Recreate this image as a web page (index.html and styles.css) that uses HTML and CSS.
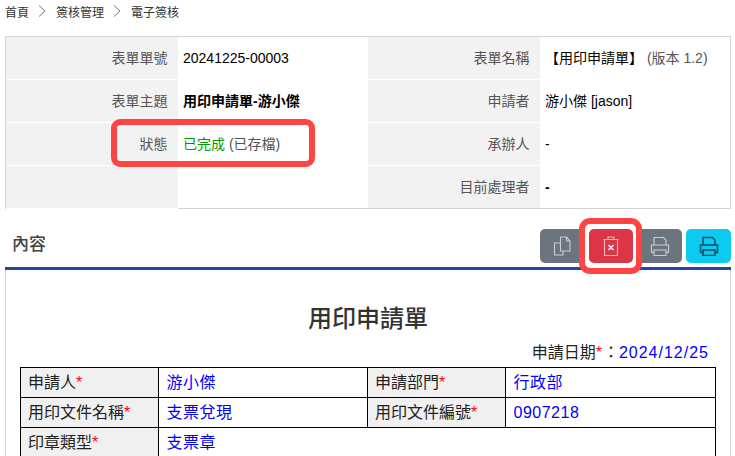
FILE: index.html
```html
<!DOCTYPE html>
<html lang="zh-Hant">
<head>
<meta charset="utf-8">
<title>電子簽核</title>
<link rel="stylesheet" href="styles.css">
</head>
<body>
<nav class="crumbs">
  <span>首頁</span><svg class="chev" viewBox="0 0 8 12"><path d="M1 .5 7 6l-6 5.500"/></svg>
  <span>簽核管理</span><svg class="chev" viewBox="0 0 8 12"><path d="M1 .5 7 6l-6 5.500"/></svg>
  <span>電子簽核</span>
</nav>
<section class="info">
  <div class="k">表單單號</div><div class="v">20241225-00003</div>
  <div class="k">表單名稱</div><div class="v wide">【用印申請單】 <span class="muted">(版本 1.2)</span></div>
  <div class="k">表單主題</div><div class="v strong">用印申請單-游小傑</div>
  <div class="k">申請者</div><div class="v">游小傑 [jason]</div>
  <div class="k">狀態</div><div class="v"><span class="done">已完成</span> <span class="muted">(已存檔)</span></div>
  <div class="k">承辦人</div><div class="v">-</div>
  <div class="k"></div><div class="v"></div>
  <div class="k">目前處理者</div><div class="v strong">-</div>
  <span class="mark mark-status"></span>
</section>
<header class="head">
  <h2>內容</h2>
  <div class="tools">
    <div class="group">
      <button class="btn first" type="button" aria-label="複製"><svg viewBox="0 0 20 20"><path d="M8.500 1h6l3.500 4v10H8.500zM14.500 1v4H18M8.500 7H2.500v12h8.500v-4"/></svg></button>
      <span class="mark mark-del"></span>
      <button class="btn red" type="button" aria-label="刪除"><svg viewBox="0 0 20 20"><path d="M7 3.500V1h6v2.500M2.500 3.500h15M3.500 3.500v16h13v-16"/><path class="x" d="m7.500 9 5 5M12.500 9l-5 5"/></svg></button>
      <button class="btn last" type="button" aria-label="列印"><svg viewBox="0 0 20 20"><path d="M4 9V1.500h9.500L16 4v5M4 16.500H1.500V9h17v7.500H16M4 14h12v5.500H4z"/></svg></button>
    </div>
    <button class="btn cyan" type="button" aria-label="列印"><svg viewBox="0 0 20 20"><path d="M4 9V1.500h9.500L16 4v5M4 16.500H1.500V9h17v7.500H16M4 14h12v5.500H4z"/></svg></button>
  </div>
</header>
<main class="sheet">
  <h1>用印申請單</h1>
  <p class="date">申請日期<i>*</i>：<b>2024/12/25</b></p>
  <table>
    <colgroup><col class="c1"><col class="c2"><col class="c3"><col class="c4"></colgroup>
    <tr><th>申請人<i>*</i></th><td>游小傑</td><th>申請部門<i>*</i></th><td>行政部</td></tr>
    <tr><th>用印文件名稱<i>*</i></th><td>支票兌現</td><th>用印文件編號<i>*</i></th><td>0907218</td></tr>
    <tr><th>印章類型<i>*</i></th><td colspan="3">支票章</td></tr>
  </table>
</main>
</body>
</html>
```
FILE: styles.css
```css
html,body{margin:0;padding:0;height:456px;overflow:hidden;background:#fff}
body{font-family:"Liberation Sans","Noto Sans CJK TC",sans-serif;font-size:14px;color:#000;width:735px}
.crumbs{display:flex;align-items:center;height:22px;padding:0 0 0 5px;font-size:12px;color:#333;gap:10px}
.crumbs span+.chev{margin-left:-1px}
.chev{width:8px;height:12px;fill:none;stroke:#777;stroke-width:1}
.info{position:relative;display:grid;grid-template-columns:172px 190px 172px 190px;grid-auto-rows:43px;width:724px;margin:14px 0 0 5px;border:1px solid #d4d4d4;height:171px}
.k{background:#f2f2f2;color:#555;text-align:right;padding-right:10.500px;line-height:42px;border-bottom:1px solid #fff;height:42px}
.k:nth-last-child(-n+3){border-bottom:0}
.v{padding-left:5px;line-height:42px}
.wide{white-space:nowrap}
.strong{font-weight:700}
.muted{color:#555}
.done{color:#090}
.mark{position:absolute;border:6px solid #f44;border-radius:9px;box-sizing:border-box}
.mark-status{left:105px;top:82px;width:204px;height:48px}
.head{display:flex;justify-content:space-between;align-items:center;width:726px;height:58px;margin-left:5px;border-bottom:3px solid #1f4a9f}
.head h2{margin:0 0 0 7px;font-size:17px;font-weight:500;color:#444;padding-top:8px}
.tools{display:flex;gap:4px;margin-top:15px}
.group{position:relative;display:flex;background:#6c757d;border-radius:5px;width:142px;height:34px}
.btn{height:34px;border:0;padding:0;display:flex;align-items:center;justify-content:center;background:transparent}
.btn svg{width:20px;height:20px;fill:none;stroke:#c9ced2;stroke-width:1.100}
.first{width:49px;padding-right:6px}
.last{width:49px;padding-left:4px}
.red{position:relative;width:44px;background:#dc3545;border-radius:5px}
.red svg{stroke:#f2b6bc}
.red .x{stroke:#fff;stroke-width:1.500}
.cyan{width:45px;background:#0dcaf0;border-radius:5px}
.cyan svg{stroke:#05506a;stroke-width:1.600}
.mark-del{left:39px;top:-11px;width:63px;height:56px;border-radius:11px;background:#fff}
.sheet{width:724px;height:186px;margin-left:5px;border:1px solid #d4d4d4;border-width:0 1px;overflow:hidden}
h1{margin:33px 0 0;text-align:center;font-size:24px;font-weight:500;line-height:32px;color:#333}
.date{margin:7px 21px 0 0;text-align:right;font-size:16px;line-height:22px;color:#222}
.date i{padding:0 1px 0 0}
.date b{font-weight:400;color:#00f;letter-spacing:1px}
i{font-style:normal;color:#f00}
table{border-collapse:collapse;table-layout:fixed;width:695px;margin:3px 0 0 14px;font-size:16px}
.c1{width:138px}.c2{width:209px}.c3{width:138px}.c4{width:210px}
th,td{border:1px solid #000;height:29px;padding:0 8px;text-align:left;font-weight:400;white-space:nowrap;line-height:24px}
th{background:#f0f0f0;color:#222;padding-left:7px}
td{color:#00f;letter-spacing:.5px;padding-left:7.500px}
```
